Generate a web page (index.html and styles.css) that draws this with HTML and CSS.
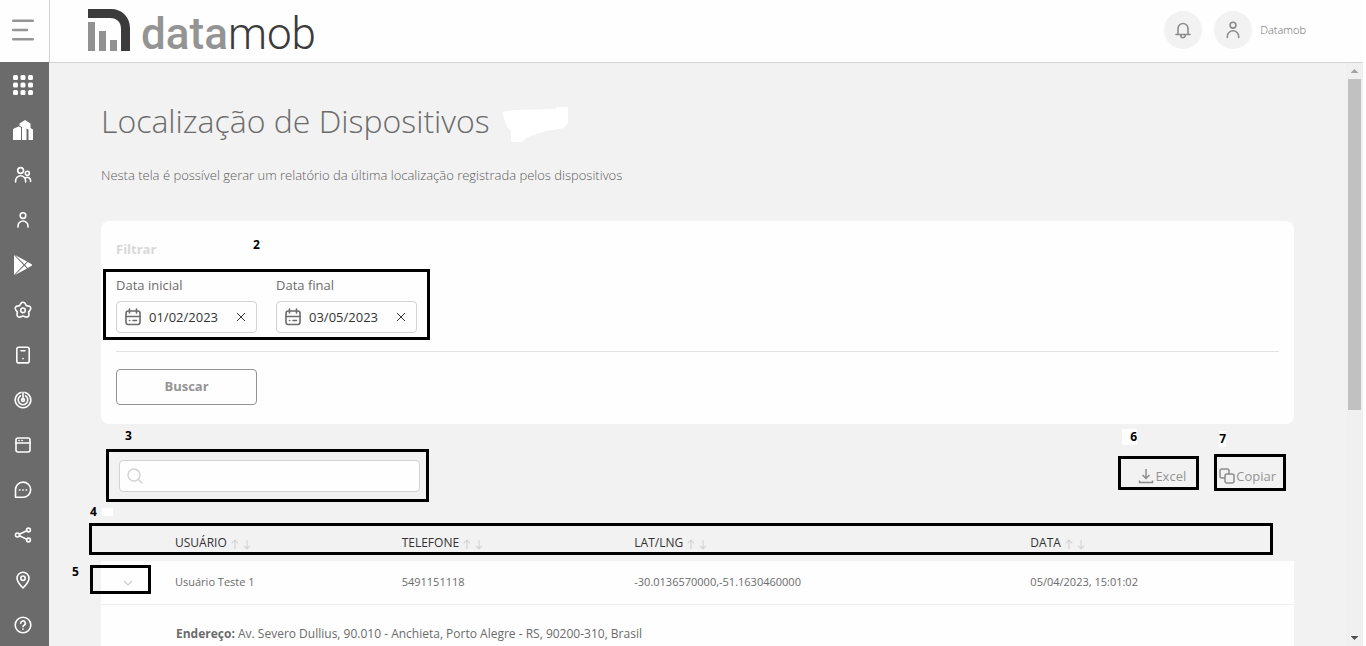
FILE: index.html
```html
<!DOCTYPE html>
<html lang="pt-BR">
<head>
<meta charset="utf-8">
<title>Datamob - Localização de Dispositivos</title>
<meta name="viewport" content="width=device-width, initial-scale=1">
<link rel="stylesheet" href="styles.css">
</head>
<body>
<div class="app">
  <div class="side">
    <button class="menu-toggle" type="button" aria-label="Menu">
      <svg width="24" height="24" viewBox="0 0 24 24" fill="none" stroke="#949494" stroke-width="2.4" stroke-linecap="round"><path d="M2.200 2.800H21.800M2.200 12H16M2.200 21.200H21.800"/></svg>
    </button>
    <nav class="side-nav" aria-label="Principal">
      <a href="#" aria-label="Aplicativos"><svg class="icon" viewBox="0 0 20 20" fill="#fff"><rect width="5" height="5" rx="1.500"/><rect x="7.500" width="5" height="5" rx="1.500"/><rect x="15" width="5" height="5" rx="1.500"/><rect y="7.500" width="5" height="5" rx="1.500"/><rect x="7.500" y="7.500" width="5" height="5" rx="1.500"/><rect x="15" y="7.500" width="5" height="5" rx="1.500"/><rect y="15" width="5" height="5" rx="1.500"/><rect x="7.500" y="15" width="5" height="5" rx="1.500"/><rect x="15" y="15" width="5" height="5" rx="1.500"/></svg></a>
      <a href="#" aria-label="Empresas"><svg class="icon" viewBox="0 0 20 20" fill="#fff"><path d="M0 20V9L5.500 6.500 8 7.500V20Z"/><path d="M6.500 6V3.500L12 0l5.500 3.500V8L20 9.500V20H15.500V9.500L13.500 8.500V20H9V7Z"/></svg></a>
      <a href="#" aria-label="Grupos"><svg class="icon" viewBox="0 0 20 20"><circle cx="7.600" cy="5.500" r="2.900"/><path d="M2.600 17v-1.200a5 5 0 0 1 10 0V17M12.600 12.700a3.400 3.400 0 0 1 5 3V16.500"/><circle cx="14.300" cy="8.200" r="2"/></svg></a>
      <a href="#" aria-label="Usuários"><svg class="icon" viewBox="0 0 20 20"><circle cx="10" cy="5.600" r="2.800"/><path d="M5 17v-1a5 5 0 0 1 10 0v1"/></svg></a>
      <a href="#" aria-label="Google Play"><svg class="icon" viewBox="0 0 20 20" fill="#fff"><path d="M1 0V20L10.500 10ZM2 0L14 6.500 11.300 9.200ZM2 20L14 13.500 11.300 10.800ZM14.800 7L19 9.500V10.500L14.800 13 12 10Z"/></svg></a>
      <a href="#" aria-label="Configurações"><svg class="icon" viewBox="0 0 20 20"><path d="M7.900 3.400Q10 1 12.100 3.400L13.300 5.600 15.800 6.100Q18.800 7.300 17.200 9.900L15.600 12 16 14.400Q15.800 17.600 12.700 17L10 15.900 7.300 17Q4.200 17.600 4 14.400L4.400 12 2.800 9.900Q1.200 7.300 4.200 6.100L6.700 5.600Z"/><circle cx="10" cy="10.300" r="2.300"/></svg></a>
      <a href="#" aria-label="Dispositivos"><svg class="icon" viewBox="0 0 20 20"><rect x="3.800" y="2.300" width="12.400" height="15.600" rx="2"/><path d="M8 5.800h4M10 13.500v.2"/></svg></a>
      <a href="#" aria-label="Monitoramento"><svg class="icon" viewBox="0 0 20 20"><path d="M10 10V2.200M12 2.400a7.800 7.800 0 1 1-4 0M12.500 5.800a4.800 4.800 0 1 1-5 0"/><circle cx="10" cy="10" r="1.500"/></svg></a>
      <a href="#" aria-label="Janelas"><svg class="icon" viewBox="0 0 20 20"><rect x="3" y="3" width="14" height="14" rx="2"/><path d="M3 8h14M6 5.500h.2M9 5.500h.2"/></svg></a>
      <a href="#" aria-label="Mensagens"><svg class="icon" viewBox="0 0 20 20"><path d="M2.500 17.300V10a7.600 7.600 0 1 1 7.600 7.300ZM6.500 10h.4M9.800 10h.4M13.100 10h.4"/></svg></a>
      <a href="#" aria-label="Compartilhar"><svg class="icon" viewBox="0 0 20 20"><circle cx="4.500" cy="10" r="2"/><circle cx="15.500" cy="5" r="1.900"/><circle cx="15.500" cy="15" r="1.900"/><path d="M6.400 9.200l7.300-3.400M6.400 10.800l7.300 3.400"/></svg></a>
      <a href="#" aria-label="Localização"><svg class="icon" viewBox="0 0 20 20"><path d="M10 18C6.500 14.500 4 12 4 8.300a6 6 0 0 1 12 0C16 12 13.500 14.500 10 18Z"/><circle cx="10" cy="8.200" r="2.200"/></svg></a>
      <a href="#" aria-label="Ajuda"><svg class="icon" viewBox="0 0 20 20"><circle cx="10" cy="10" r="7.800"/><path d="M7.700 8.200a2.300 2.300 0 1 1 3.400 2c-.8.400-1.100.8-1.100 1.500M10 14v.2"/></svg></a>
    </nav>
  </div>

  <div class="content">
    <header class="topbar">
      <a class="brand" href="#">
        <svg width="42" height="42" viewBox="0 0 42 42" aria-hidden="true"><path d="M0 0H23C34 0 42 8 42 19V42H33V20C33 13 29 9 22 9H0Z" fill="#3b3b3b"/><path d="M0 13H7V42H0ZM11 22H18V42H11ZM22 31H29V42H22Z" fill="#919191"/></svg>
        <span class="brand-name"><b>data</b>mob</span>
      </a>
      <div class="account">
        <button class="round" type="button" aria-label="Notificações"><svg class="icon dark" viewBox="0 0 20 20"><path d="M3 14.500h14M4.600 14.500C5.300 12.500 5 11 5 8.500a5 5 0 0 1 10 0c0 2.500-.3 4 .4 6M7.800 15v.5a2.200 2.200 0 0 0 4.400 0V15"/></svg></button>
        <button class="round" type="button" aria-label="Perfil"><svg class="icon dark" viewBox="0 0 20 20"><circle cx="10" cy="5.200" r="2.900"/><path d="M4.300 17.500v-1a5.700 5.700 0 0 1 11.400 0v1"/></svg></button>
        <span class="account-name">Datamob</span>
      </div>
    </header>

    <div class="viewport">
      <main class="page">
        <div class="title-row">
          <h1>Localização de Dispositivos</h1>
          <svg width="66" height="36" viewBox="0 0 66 36" fill="#fff" aria-hidden="true"><path d="M0 5L13 3 53 2 55 0H66V16L62 21 44 24 26 30 20 35H9V24L5 20Z"/></svg>
        </div>
        <p class="lead">Nesta tela é possível gerar um relatório da última localização registrada pelos dispositivos</p>

        <form class="card">
          <h2>Filtrar</h2>
          <div class="dates">
            <div class="field">
              <label for="start">Data inicial</label>
              <div class="date-box">
                <svg class="icon cal" viewBox="0 0 20 20"><rect x="3" y="4" width="14" height="13.500" rx="2.200"/><path d="M3 9.500h14M6.500 2v4M13.500 2v4M6.500 13.500h.3M10 13.500h3.500"/></svg>
                <input id="start" type="text" value="01/02/2023">
                <button type="button" aria-label="Limpar data inicial"><svg width="10" height="10" viewBox="0 0 10 10" fill="none" stroke="#333"><path d="M1 1l8 8M9 1L1 9"/></svg></button>
              </div>
            </div>
            <div class="field">
              <label for="end">Data final</label>
              <div class="date-box">
                <svg class="icon cal" viewBox="0 0 20 20"><rect x="3" y="4" width="14" height="13.500" rx="2.200"/><path d="M3 9.500h14M6.500 2v4M13.500 2v4M6.500 13.500h.3M10 13.500h3.500"/></svg>
                <input id="end" type="text" value="03/05/2023">
                <button type="button" aria-label="Limpar data final"><svg width="10" height="10" viewBox="0 0 10 10" fill="none" stroke="#333"><path d="M1 1l8 8M9 1L1 9"/></svg></button>
              </div>
            </div>
            <span class="mark mark-dates"></span>
            <span class="num num-2">2</span>
          </div>
          <button class="submit" type="button">Buscar</button>
        </form>

        <div class="toolbar">
          <div class="search">
            <svg width="16" height="16" viewBox="0 0 16 16" fill="none" stroke="#d3d3d3" stroke-width="1.500" stroke-linecap="round"><circle cx="7" cy="7" r="6"/><path d="M11.500 11.500L15 15"/></svg>
            <input type="search" aria-label="Pesquisar">
            <span class="mark mark-search"></span>
            <span class="num num-3">3</span>
          </div>
          <div class="exports">
            <button class="export" type="button">
              <svg width="16" height="16" viewBox="0 0 16 16"><path d="M8 1v9M4.500 7L8 10.500 11.500 7M1.500 12.500V14.500H14.500V12.500"/></svg>Excel
              <span class="mark mark-excel"></span><span class="num smudged num-6">6</span>
            </button>
            <button class="export" type="button">
              <svg width="16" height="16" viewBox="0 0 16 16"><rect x="1" y="1" width="9" height="9" rx="2"/><rect x="6" y="6" width="9" height="9" rx="2" fill="#f2f2f2"/></svg>Copiar
              <span class="mark mark-copy"></span><span class="num smudged num-7">7</span>
            </button>
          </div>
        </div>

        <div class="table-wrap">
          <table>
            <colgroup><col class="c-toggle"><col class="c-user"><col class="c-phone"><col class="c-pos"><col></colgroup>
            <thead>
              <tr>
                <th></th>
                <th>USUÁRIO <svg class="sort" viewBox="0 0 20 10"><path d="M4.500 9V1M1.500 4l3-3 3 3M15.500 1v8M12.500 6l3 3 3-3"/></svg></th>
                <th>TELEFONE <svg class="sort" viewBox="0 0 20 10"><path d="M4.500 9V1M1.500 4l3-3 3 3M15.500 1v8M12.500 6l3 3 3-3"/></svg></th>
                <th>LAT/LNG <svg class="sort" viewBox="0 0 20 10"><path d="M4.500 9V1M1.500 4l3-3 3 3M15.500 1v8M12.500 6l3 3 3-3"/></svg></th>
                <th>DATA <svg class="sort" viewBox="0 0 20 10"><path d="M4.500 9V1M1.500 4l3-3 3 3M15.500 1v8M12.500 6l3 3 3-3"/></svg></th>
              </tr>
            </thead>
            <tbody>
              <tr>
                <td class="toggle"><button type="button" aria-label="Recolher"><svg width="10" height="6" viewBox="0 0 10 6" fill="none" stroke="#ccc" stroke-width="1.200"><path d="M1 1l4 4 4-4"/></svg></button></td>
                <td>Usuário Teste 1</td>
                <td>5491151118</td>
                <td>-30.0136570000,-51.1630460000</td>
                <td>05/04/2023, 15:01:02</td>
              </tr>
              <tr class="detail">
                <td></td>
                <td colspan="4"><b>Endereço:</b> Av. Severo Dullius, 90.010 - Anchieta, Porto Alegre - RS, 90200-310, Brasil</td>
              </tr>
            </tbody>
          </table>
          <span class="mark mark-head"></span>
          <span class="mark mark-toggle"></span>
          <span class="num num-4">4</span>
          <span class="smudge"></span>
          <span class="num num-5">5</span>
        </div>
      </main>
      <div class="scrollbar" aria-hidden="true">
        <span class="arrow up"></span>
        <span class="track"><span class="thumb"></span></span>
        <span class="arrow down"></span>
      </div>
    </div>
  </div>
</div>
</body>
</html>
```

FILE: styles.css
```css
* { box-sizing: border-box; }

body {
  margin: 0;
  background: #fff;
  color: #6b6b6b;
  font: 13px/20px "Open Sans", "Noto Sans", sans-serif;
}

button, input { font: inherit; color: inherit; }
button { padding: 0; border: 0; background: none; cursor: pointer; }
a { color: inherit; text-decoration: none; }
svg { display: block; flex: none; }

.icon {
  width: 20px;
  height: 20px;
  fill: none;
  stroke: #fff;
  stroke-width: 1.6;
  stroke-linecap: round;
  stroke-linejoin: round;
}
.icon[fill] { fill: #fff; stroke: none; }
.icon.dark { stroke: #8c8c8c; }
.icon.cal { stroke: #6b6b6b; }

/* Shell */
.app {
  display: grid;
  grid-template-columns: 49px minmax(0, 1fr);
  height: 100vh;
  padding-right: 3px;
  overflow: hidden;
}
.side {
  display: flex;
  flex-direction: column;
  min-height: 0;
}
.menu-toggle {
  display: flex;
  flex: none;
  align-items: center;
  height: 62px;
  padding: 0 0 2px 11px;
  background: #fefefe;
}
.side-nav {
  flex: 1;
  min-height: 0;
  overflow: hidden;
  background: #6b6b6b;
}
.side-nav a {
  display: flex;
  align-items: center;
  height: 45px;
  padding-left: 13px;
}
.content {
  display: flex;
  flex-direction: column;
  min-height: 0;
}

/* Top bar */
.topbar {
  display: flex;
  flex: none;
  align-items: center;
  justify-content: space-between;
  height: 63px;
  padding: 0 57px 2px 38px;
  border-bottom: 1px solid #d3d3d3;
  border-left: 1px solid #d3d3d3;
  background: #fefefe;
}
.brand {
  display: flex;
  align-items: center;
  gap: 11px;
}
.brand-name {
  padding-top: 8px;
  color: #3b3b3b;
  font: 300 44px/48px Roboto, sans-serif;
}
.brand-name b { color: #949494; font-weight: 500; }
.account {
  display: flex;
  align-items: center;
  gap: 12px;
}
.account-name {
  margin-left: -4px;
  font-size: 11px;
  font-weight: 300;
}
.round {
  display: grid;
  place-items: center;
  width: 38px;
  height: 38px;
  border-radius: 50%;
  background: #f2f2f2;
}

/* Page */
.viewport {
  display: flex;
  flex: 1;
  min-height: 0;
  background: #f2f2f2;
}
.page {
  flex: 1;
  min-width: 0;
  padding: 34px 52px 0;
  overflow: hidden;
}
.title-row {
  display: flex;
  align-items: center;
  gap: 12px;
  height: 48px;
}
h1 {
  margin: 0;
  font-size: 32px;
  font-weight: 300;
  line-height: 48px;
}
.title-row svg { margin-top: 8px; }
.lead {
  margin: 20px 0 36px;
  color: #5c5c5c;
  font-weight: 300;
}

/* Filter card */
.card {
  padding: 18px 15px 19px;
  border-radius: 8px;
  background: #fefefe;
}
h2 {
  margin: 0;
  color: #d8d8d8;
  font-size: 13px;
  line-height: 20px;
}
.dates {
  position: relative;
  display: flex;
  gap: 19px;
  padding: 16px 0 18px;
  border-bottom: 1px solid #e3e3e3;
}
.field { width: 141px; }
.field label {
  display: block;
  margin-bottom: 6px;
}
.date-box {
  display: flex;
  align-items: center;
  height: 32px;
  padding: 0 10px 0 6px;
  border: 1px solid #d3d3d3;
  border-radius: 4px;
}
.date-box input {
  flex: 1;
  min-width: 0;
  margin-left: 6px;
  padding: 0;
  border: 0;
  outline: 0;
  background: none;
  color: #333;
}
.submit {
  display: block;
  width: 141px;
  height: 36px;
  margin-top: 17px;
  padding-bottom: 2px;
  border: 1px solid #949494;
  border-radius: 4px;
  color: #949494;
  font-weight: 700;
}

/* Toolbar */
.toolbar {
  display: flex;
  align-items: center;
  justify-content: space-between;
  padding: 36px 18px 33px;
}
.search {
  position: relative;
  display: flex;
  align-items: center;
  width: 301px;
  height: 32px;
  padding: 0 7px;
  border: 1px solid #d3d3d3;
  border-radius: 4px;
  background: #fefefe;
}
.search input {
  flex: 1;
  min-width: 0;
  border: 0;
  outline: 0;
  background: none;
}
.exports {
  display: flex;
  gap: 33px;
}
.export {
  position: relative;
  display: flex;
  align-items: center;
  gap: 1px;
  color: #949494;
}
.export svg {
  fill: none;
  stroke: #8c8c8c;
  stroke-width: 1.5;
}

/* Results */
.table-wrap { position: relative; }
table {
  width: 100%;
  table-layout: fixed;
  border-collapse: collapse;
  font-size: 11px;
}
.c-toggle { width: 64px; }
.c-user { width: 19%; }
.c-phone { width: 19.5%; }
.c-pos { width: 33.2%; }
th {
  height: 36px;
  padding: 0 10px;
  color: #333;
  font-size: 12px;
  font-weight: 400;
  text-align: left;
}
.sort {
  display: inline-block;
  width: 22px;
  height: 11px;
  vertical-align: -3px;
  fill: none;
  stroke: #d3d3d3;
}
td {
  height: 43px;
  padding: 0 10px;
  border-bottom: 1px solid #efefef;
  background: #fefefe;
}
.toggle { padding-left: 22px; }
.detail td {
  height: 60px;
  padding-left: 11px;
  border: 0;
  font-size: 12px;
}

/* Numbered callouts */
.mark {
  position: absolute;
  border: 3px solid #000;
  pointer-events: none;
}
.num {
  position: absolute;
  color: #000;
  font-size: 12px;
  font-weight: 700;
  line-height: 16px;
}
.smudged { background: #fefefe; }
.mark-dates { top: 10px; left: -13px; width: 327px; height: 71px; }
.num-2 { top: -22px; left: 137px; }
.mark-search { top: -12px; right: -10px; left: -14px; height: 53px; }
.num-3 { top: -33px; left: 5px; }
.mark-excel { top: -10px; right: -13px; width: 81px; height: 34px; }
.num-6 { top: -37px; right: 49px; padding-left: 8px; }
.mark-copy { top: -12px; right: -10px; width: 72px; height: 37px; }
.num-7 { top: -35px; right: 50px; }
.mark-head { top: -2px; right: 21px; left: -12px; height: 32px; }
.mark-toggle { top: 40px; left: -11px; width: 61px; height: 29px; }
.num-4 { top: -21px; left: -11px; }
.smudge {
  position: absolute;
  top: -17px;
  left: 1px;
  width: 11px;
  height: 8px;
  background: #fefefe;
}
.num-5 { top: 39px; left: -29px; }
.page { position: relative; }

/* Scrollbar */
.scrollbar {
  display: flex;
  flex: none;
  flex-direction: column;
  align-items: center;
  width: 17px;
  background: #f0f0f0;
}
.arrow {
  width: 8px;
  height: 4px;
  margin: 6px 0;
}
.up { background: #a3a3a3; clip-path: polygon(50% 0, 100% 100%, 0 100%); }
.down { background: #505050; clip-path: polygon(0 0, 100% 0, 50% 100%); }
.track {
  flex: 1;
  width: 13px;
}
.thumb {
  display: block;
  height: 60%;
  background: #c1c1c1;
}
```
